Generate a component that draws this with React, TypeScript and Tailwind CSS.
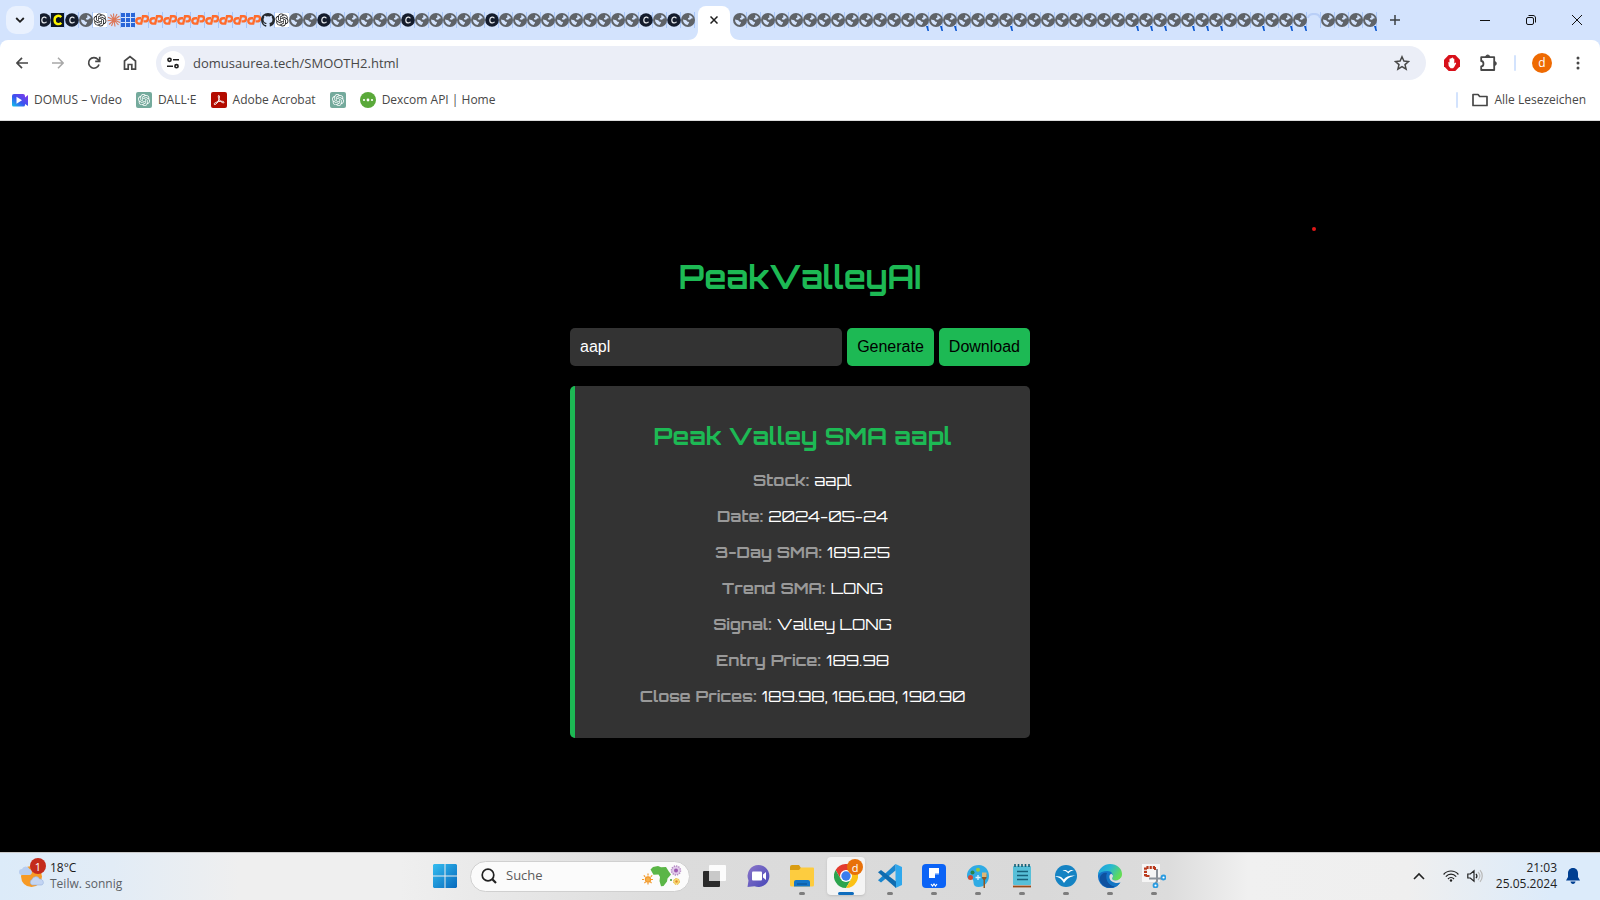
import { useState, type ReactNode } from 'react';

const BLUE_SEP = 'bg-[#a8c7fa]';

function Globe() {
  return (
    <svg viewBox="0 0 14 14" className="size-[14px]">
      <circle cx="7" cy="7" r="7" fill="#5f6368" />
      <path d="M8.200 2c2 .4 3.200 1.700 3.700 3.300l-1.700.2-1.100 1.300-1.900-.2-.3-1.300 1.500-.9z" fill="#d3e3fd" />
      <path d="M2 6.500l3.200.7 1.300 1.500 1.600.4-.5 1.500-1 1.400C4 11.800 2 9.600 2 6.500z" fill="#d3e3fd" />
    </svg>
  );
}

function DarkC() {
  return (
    <svg viewBox="0 0 14 14" className="size-[14px]">
      <circle cx="7" cy="7" r="6.800" fill="#141c2c" />
      <path d="M9.300 5.300C8.800 3.600 5 3.500 4.800 6.900c-.1 3.600 3.700 3.700 4.700 1.900" fill="none" stroke="#e8eaed" strokeWidth="1.200" />
    </svg>
  );
}

function YellowC() {
  return (
    <svg viewBox="0 0 14 14" className="size-[14px]">
      <rect width="13" height="14" fill="#0b1424" />
      <path d="M10.200 4.200C8.600 2 3.600 2.300 3.600 7s5 5 6.600 2.700" fill="none" stroke="#fbf400" strokeWidth="2.400" />
    </svg>
  );
}

function Knot({ color }: { color: string }) {
  return (
    <path
      fill={color}
      d="M22.282 9.821a5.985 5.985 0 0 0-.516-4.910 6.046 6.046 0 0 0-6.510-2.900A6.065 6.065 0 0 0 4.981 4.182a5.985 5.985 0 0 0-3.998 2.900 6.046 6.046 0 0 0 .743 7.097 5.980 5.980 0 0 0 .510 4.911 6.051 6.051 0 0 0 6.515 2.900A5.985 5.985 0 0 0 13.260 24a6.056 6.056 0 0 0 5.772-4.206 5.990 5.990 0 0 0 3.997-2.900 6.056 6.056 0 0 0-.747-7.073zM13.260 22.430a4.476 4.476 0 0 1-2.876-1.040l.141-.081 4.779-2.758a.795.795 0 0 0 .392-.681v-6.737l2.020 1.168a.071.071 0 0 1 .038.052v5.583a4.504 4.504 0 0 1-4.494 4.494zM3.600 18.304a4.470 4.470 0 0 1-.535-3.014l.142.085 4.783 2.759a.771.771 0 0 0 .780 0l5.843-3.369v2.332a.080.080 0 0 1-.033.062L9.740 19.950a4.499 4.499 0 0 1-6.140-1.646zM2.340 7.896a4.485 4.485 0 0 1 2.366-1.973V11.600a.766.766 0 0 0 .388.676l5.815 3.355-2.020 1.168a.076.076 0 0 1-.071 0l-4.830-2.786A4.504 4.504 0 0 1 2.340 7.872zm16.597 3.855l-5.833-3.387L15.119 7.200a.076.076 0 0 1 .071 0l4.830 2.791a4.494 4.494 0 0 1-.676 8.105v-5.678a.790.790 0 0 0-.407-.667zm2.010-3.023l-.141-.085-4.774-2.782a.776.776 0 0 0-.785 0L9.409 9.230V6.897a.066.066 0 0 1 .028-.061l4.830-2.787a4.499 4.499 0 0 1 6.680 4.660zm-12.640 4.135l-2.020-1.164a.080.080 0 0 1-.038-.057V6.075a4.499 4.499 0 0 1 7.375-3.453l-.142.080L8.704 5.460a.795.795 0 0 0-.393.681zm1.097-2.365l2.602-1.500 2.607 1.500v2.999l-2.597 1.500-2.607-1.500z"
    />
  );
}

function KnotTab() {
  return (
    <svg viewBox="-1 -1 26 26" className="size-[14px]">
      <rect x="-1" y="-1" width="26" height="26" fill="#fff" />
      <Knot color="#202123" />
    </svg>
  );
}

function KnotBadge() {
  return (
    <svg viewBox="-4 -4 32 32" className="size-4 shrink-0">
      <rect x="-4" y="-4" width="32" height="32" rx="4" fill="#74aa9c" />
      <Knot color="#fff" />
    </svg>
  );
}

function Burst() {
  return (
    <svg viewBox="0 0 14 14" className="size-[14px]">
      <path
        d="M7 7L6.500.5M7 7l3-6M7 7l5.500-4M7 7l6.500-.5M7 7l6 2.500M7 7l4.500 5M7 7l1 6.500M7 7l-2.500 6M7 7l-5 4.500M7 7L.5 7.800M7 7L1 4.200M7 7L3.500 1.500"
        stroke="#dd7758"
        strokeWidth="1.100"
      />
    </svg>
  );
}

function Squares() {
  return (
    <svg viewBox="0 0 14 14" className="size-[14px]" fill="#2a66d8">
      {[0, 5, 10].map((y) => [0, 5, 10].map((x) => <rect key={`${x}-${y}`} x={x} y={y} width="4" height="4" />))}
    </svg>
  );
}

function PanelMark() {
  return (
    <svg viewBox="0 0 14 14" className="size-[14px]" fill="none" stroke="#ff6c2c" strokeWidth="2.400">
      <path d="M6 5.200H4.200C.4 5.200.4 10.600 3.800 10.600h2.400L8 3.200h2.800c3.300 0 2.600 5.200-.6 5.200H8.500" />
    </svg>
  );
}

function Octocat() {
  return (
    <svg viewBox="0 0 16 16" className="size-[14px]" fill="#24292f">
      <path d="M8 0C3.580 0 0 3.580 0 8c0 3.540 2.290 6.530 5.470 7.590.4.070.55-.17.55-.38v-1.490c-2.230.49-2.700-1.070-2.700-1.070-.36-.92-.89-1.170-.89-1.170-.73-.5.050-.49.050-.49.81.060 1.230.83 1.230.83.72 1.230 1.880.87 2.340.67.070-.52.28-.87.51-1.070-1.780-.2-3.640-.89-3.640-3.950 0-.87.31-1.590.82-2.150-.08-.2-.36-1.020.080-2.120 0 0 .67-.21 2.200.82a7.600 7.600 0 0 1 4 0c1.530-1.040 2.200-.82 2.200-.82.44 1.100.16 1.920.080 2.120.51.56.82 1.270.82 2.150 0 3.070-1.870 3.750-3.650 3.950.29.25.54.73.54 1.480v2.200c0 .21.15.46.55.38A8 8 0 0 0 16 8c0-4.420-3.580-8-8-8z" />
    </svg>
  );
}

const TAB_ICONS: Record<string, () => ReactNode> = {
  g: Globe,
  c: DarkC,
  y: YellowC,
  o: KnotTab,
  b: Burst,
  q: Squares,
  p: PanelMark,
  h: Octocat,
};

const LEFT_TABS = 'ycgobq' + 'ppppppppp' + 'ho' + 'ggc' + 'gggggc' + 'gggggc' + 'ggggggggggc' + 'gcg';
const RIGHT_TABS = 'g'.repeat(41) + '-' + 'g'.repeat(4);
const MARKED = new Set([13, 14, 15, 19, 28, 29, 30, 32, 33, 34, 37, 39, 40, 45]);

function Tab({ kind, marked = false }: { kind: string; marked?: boolean }) {
  const Icon = TAB_ICONS[kind];
  return (
    <button type="button" aria-label="Tab" className="relative flex h-[14px] w-[14px] shrink-0 items-center justify-center">
      <span className={`absolute -top-px right-0 h-4 w-px ${BLUE_SEP}`} />
      <span className="relative">
        {Icon ? (
          <Icon />
        ) : (
          <svg viewBox="0 0 14 14" className="size-[14px]" fill="none" stroke="#b9cff7" strokeWidth="2">
            <path d="M1 5C2-.5 12-.5 13 5" />
          </svg>
        )}
      </span>
      {marked && (
        <svg viewBox="0 0 3 5" className="absolute top-[13px] right-0 h-[5px] w-[3px]">
          <path d="M0 0h2l1 5H1.500z" fill="#0b57d0" />
        </svg>
      )}
    </button>
  );
}

function TabStrip() {
  return (
    <div className="flex h-10 items-center bg-[#d3e3fd]">
      <button type="button" aria-label="Search tabs" className="ml-[6px] flex size-7 shrink-0 items-center justify-center rounded-[10px] bg-[#e9f1fe]">
        <svg viewBox="0 0 10 10" className="size-[10px]" fill="none" stroke="#1f1f1f" strokeWidth="1.800">
          <path d="M1.200 3L5 6.800 8.800 3" />
        </svg>
      </button>
      <div className="ml-[6px] flex w-[11px] shrink-0 justify-end overflow-hidden">
        <Tab kind="c" />
      </div>
      {LEFT_TABS.split('').map((k, i) => (
        <Tab key={i} kind={k} />
      ))}
      <div className="relative mx-[3px] flex h-[34px] w-8 shrink-0 items-center justify-center self-end rounded-t-lg bg-white">
        <svg viewBox="0 0 10 10" className="absolute bottom-0 -left-[10px] size-[10px]" fill="#fff">
          <path d="M10 0v10H0C6 10 10 6 10 0z" />
        </svg>
        <svg viewBox="0 0 10 10" className="absolute -right-[10px] bottom-0 size-[10px]" fill="#fff">
          <path d="M0 0v10h10C4 10 0 6 0 0z" />
        </svg>
        <button type="button" aria-label="Close tab" className="mb-[6px]">
          <svg viewBox="0 0 8 8" className="size-2" stroke="#1f1f1f" strokeWidth="1.500">
            <path d="M.5.5l7 7M7.500.5l-7 7" />
          </svg>
        </button>
      </div>
      {RIGHT_TABS.split('').map((k, i) => (
        <Tab key={i} kind={k} marked={MARKED.has(i)} />
      ))}
      <button type="button" aria-label="New tab" className="ml-[13px] shrink-0">
        <svg viewBox="0 0 10 10" className="size-[10px]" stroke="#3c4043" strokeWidth="1.500">
          <path d="M5 0v10M0 5h10" />
        </svg>
      </button>
      <div className="ml-auto flex shrink-0">
        <button type="button" aria-label="Minimize" className="flex w-[46px] justify-center">
          <svg viewBox="0 0 10 10" className="size-[10px]" stroke="#111" strokeWidth="1">
            <path d="M0 5.500h10" />
          </svg>
        </button>
        <button type="button" aria-label="Restore" className="flex w-[46px] justify-center">
          <svg viewBox="0 0 10 10" className="size-[10px]" fill="none" stroke="#111">
            <rect x=".5" y="2.500" width="7" height="7" rx="1.500" />
            <path d="M2.500 .5h4.500c1.600 0 2.500 1 2.500 2.500v4.500" />
          </svg>
        </button>
        <button type="button" aria-label="Close window" className="flex w-[46px] justify-center">
          <svg viewBox="0 0 10 10" className="size-[10px]" stroke="#111">
            <path d="M0 0l10 10M10 0L0 10" />
          </svg>
        </button>
      </div>
    </div>
  );
}

function ToolButton({ label, children }: { label: string; children: ReactNode }) {
  return (
    <button type="button" aria-label={label} className="flex size-9 shrink-0 items-center justify-center">
      {children}
    </button>
  );
}

function Toolbar() {
  return (
    <div className="flex h-[46px] items-center rounded-t-lg bg-white pl-1">
      <ToolButton label="Back">
        <svg viewBox="0 0 12 12" className="size-3" fill="none" stroke="#474747" strokeWidth="1.700">
          <path d="M12 6H1.200M6 .8L.9 6 6 11.200" />
        </svg>
      </ToolButton>
      <ToolButton label="Forward">
        <svg viewBox="0 0 12 12" className="size-3" fill="none" stroke="#a8a8a8" strokeWidth="1.500">
          <path d="M0 6h10.800M6 .8L11.100 6 6 11.200" />
        </svg>
      </ToolButton>
      <ToolButton label="Reload">
        <svg viewBox="0 0 14 14" className="size-[14px]" fill="none" stroke="#474747" strokeWidth="1.700">
          <path d="M12 8.500A5.300 5.300 0 1 1 11 3.500l1.300 1.500M12.700.8v4.500H8.200" />
        </svg>
      </ToolButton>
      <ToolButton label="Home">
        <svg viewBox="0 0 14 16" className="h-4 w-[14px]" fill="none" stroke="#474747" strokeWidth="1.700">
          <path d="M1.500 14.200V6L7 1.700 12.500 6v8.200H8.800V9.500H5.200v4.700z" />
        </svg>
      </ToolButton>
      <div className="ml-2 flex h-[34px] flex-1 items-center rounded-full bg-[#ebeef7] pr-4 pl-[5px]">
        <button type="button" aria-label="Site information" className="flex size-6 shrink-0 items-center justify-center rounded-full bg-white">
          <svg viewBox="0 0 12 12" className="size-3" fill="none" stroke="#1f1f1f" strokeWidth="1.600">
            <circle cx="2.500" cy="2.800" r="1.600" />
            <path d="M6 2.800h6M0 9.200h6" />
            <circle cx="9.500" cy="9.200" r="1.600" />
          </svg>
        </button>
        <input
          aria-label="Address"
          defaultValue="domusaurea.tech/SMOOTH2.html"
          className="ml-2 min-w-0 flex-1 bg-transparent text-[13px] leading-5 text-[#474747] outline-none"
        />
        <button type="button" aria-label="Bookmark">
          <svg viewBox="0 0 16 16" className="size-4" fill="none" stroke="#474747" strokeWidth="1.500">
            <path d="M8 1.800l1.900 4.300 4.600.4L11 9.600l1.100 4.600L8 11.700l-4.100 2.500L5 9.600 1.500 6.500l4.600-.4z" />
          </svg>
        </button>
      </div>
      <div className="ml-2 flex items-center">
        <ToolButton label="Ad blocker">
          <svg viewBox="0 0 16 16" className="size-4">
            <path d="M4.700 0h6.600L16 4.700v6.600L11.300 16H4.700L0 11.300V4.700z" fill="#d8101a" />
            <path d="M4.300 7l1.200.6V4.200a.6.600 0 0 1 1.200 0v-.7a.6.600 0 0 1 1.200 0v-.3a.6.600 0 0 1 1.200 0v.8a.6.600 0 0 1 1.200 0v4.500l1.200-.9.700.6-2 3.700-1.100 1.300H6.600L4.700 11z" fill="#fff" />
          </svg>
        </ToolButton>
        <ToolButton label="Extensions">
          <svg viewBox="0 0 18 18" className="size-[18px]">
            <path d="M2.200 3.200h13v12.800h-13v-3.500c3-.2 3-5.300 0-5.500z" fill="none" stroke="#474747" strokeWidth="1.800" strokeLinejoin="round" />
            <path d="M6.700 3a2 2 0 0 1 4 0zM15.300 7.500a2 2 0 0 1 0 4z" fill="#474747" stroke="#474747" />
          </svg>
        </ToolButton>
      </div>
      <div className="ml-2 h-4 w-0.5 rounded bg-[#d3e3fd]" />
      <button type="button" aria-label="Profile" className="ml-4 flex size-5 items-center justify-center rounded-full bg-[#ee6a02] text-xs leading-5 text-white">
        d
      </button>
      <button type="button" aria-label="Menu" className="mr-5 ml-6">
        <svg viewBox="0 0 4 14" className="h-[14px] w-1" fill="#474747">
          <circle cx="2" cy="2" r="1.500" />
          <circle cx="2" cy="7" r="1.500" />
          <circle cx="2" cy="12" r="1.500" />
        </svg>
      </button>
    </div>
  );
}

function Bookmark({ icon, text }: { icon: ReactNode; text: string }) {
  return (
    <a href="#" className="flex items-center gap-[6px] whitespace-nowrap">
      {icon}
      {text}
    </a>
  );
}

function Bookmarks() {
  return (
    <nav className="flex h-[35px] items-center gap-[14px] border-b border-[#dcdcdc] bg-white pb-[7px] pl-3 text-xs text-[#474747]">
      <Bookmark
        text="DOMUS – Video"
        icon={
          <svg viewBox="0 0 16 16" className="size-4">
            <defs>
              <linearGradient id="cam" x1="0" y1="1" x2="1" y2="0">
                <stop offset="0" stopColor="#10c8e8" />
                <stop offset=".45" stopColor="#3a54f0" />
                <stop offset="1" stopColor="#8a35e8" />
              </linearGradient>
            </defs>
            <path d="M2 2h9a2 2 0 0 1 2 2v1.500L16 3v11l-3-2v1a1.500 1.500 0 0 1-1.500 1.500H1.500A1.500 1.500 0 0 1 0 13V4a2 2 0 0 1 2-2z" fill="url(#cam)" />
            <path d="M4.500 4.800l5.500 3.500-5.500 3.500z" fill="#fff" />
          </svg>
        }
      />
      <Bookmark text="DALL·E" icon={<KnotBadge />} />
      <Bookmark
        text="Adobe Acrobat"
        icon={
          <svg viewBox="0 0 16 16" className="size-4">
            <rect width="16" height="16" rx="2" fill="#b30b00" />
            <path d="M3.200 12.300c-.9-1 3-2.500 4.600-2.800 2.700-.6 5.300-.2 5.200.9-.3 1.500-3.900-.9-5-3.200-.8-1.600-1-3.800-.2-3.800 1.200 0 .4 4.300-1 6.500-1.200 2-2.900 3.200-3.600 2.400z" fill="none" stroke="#fff" strokeWidth="1" />
          </svg>
        }
      />
      <a href="#" aria-label="Bookmark">
        <KnotBadge />
      </a>
      <Bookmark
        text="Dexcom API | Home"
        icon={
          <svg viewBox="0 0 16 16" className="size-4">
            <circle cx="8" cy="8" r="8" fill="#5aa93a" />
            <g fill="#fff">
              <circle cx="4" cy="8" r="1.100" />
              <circle cx="8" cy="8" r="1.400" />
              <circle cx="12" cy="8" r="1.100" />
            </g>
          </svg>
        }
      />
      <div className="ml-auto h-4 w-0.5 rounded bg-[#d3e3fd]" />
      <a href="#" className="mr-[14px] flex items-center gap-[6px] whitespace-nowrap">
        <svg viewBox="0 0 16 14" className="h-[14px] w-4" fill="none" stroke="#474747" strokeWidth="1.700" strokeLinejoin="round">
          <path d="M1 12.500v-11h5l1.700 2H15v9z" />
        </svg>
        Alle Lesezeichen
      </a>
    </nav>
  );
}

const ROWS = [
  ['Stock:', 'aapl'],
  ['Date:', '2024-05-24'],
  ['3-Day SMA:', '189.25'],
  ['Trend SMA:', 'LONG'],
  ['Signal:', 'Valley LONG'],
  ['Entry Price:', '189.98'],
  ['Close Prices:', '189.98, 186.88, 190.90'],
];

function Page() {
  const [symbol, setSymbol] = useState('aapl');
  return (
    <main className="relative flex flex-1 items-center justify-center bg-black font-[Orbitron,'DejaVu_Sans',sans-serif]">
      <div className="w-[460px] pt-[21px] text-center">
        <h1 className="text-[32px] leading-10 font-bold text-[#1db954]">PeakValleyAI</h1>
        <div className="mt-[31px] flex gap-[5px] font-['Liberation_Sans',Arial,sans-serif] text-base leading-[18px]">
          <input
            aria-label="Stock symbol"
            value={symbol}
            onChange={(e) => setSymbol(e.target.value)}
            className="min-w-0 flex-1 rounded-[5px] bg-[#333] p-[10px] text-white outline-none"
          />
          <button type="button" className="rounded-[5px] bg-[#1db954] p-[10px] text-black">
            Generate
          </button>
          <button type="button" className="rounded-[5px] bg-[#1db954] p-[10px] text-black">
            Download
          </button>
        </div>
        <section className="mt-5 rounded-[5px] border-l-[5px] border-[#1db954] bg-[#333] px-5 pt-9 pb-6">
          <h2 className="text-2xl leading-7 font-bold text-[#1db954]">Peak Valley SMA aapl</h2>
          <dl className="mt-3 text-base leading-9 text-white">
            {ROWS.map(([label, value]) => (
              <div key={label} className="flex justify-center gap-[5px] whitespace-nowrap">
                <dt className="font-bold text-[#999]">{label}</dt>
                <dd>{value}</dd>
              </div>
            ))}
          </dl>
        </section>
      </div>
      <span className="absolute top-[106px] left-[82%] size-1 rounded-full bg-[#e01818]" />
    </main>
  );
}

function TaskIcon({ label, running = true, active = false, children }: { label: string; running?: boolean; active?: boolean; children: ReactNode }) {
  return (
    <button type="button" aria-label={label} className="relative flex h-[46px] w-11 shrink-0 items-center justify-center">
      <span className={active ? 'flex h-[38px] w-[38px] items-center justify-center rounded bg-[#f4f4f4] shadow-sm' : 'flex'}>{children}</span>
      {running && <span className={active ? 'absolute bottom-1 h-[3px] w-4 rounded-full bg-[#0f6cbd]' : 'absolute bottom-1 h-[3px] w-[6px] rounded-full bg-[#7d7d7d]'} />}
    </button>
  );
}

function TaskIcons() {
  return (
    <>
      <TaskIcon label="Task view" running={false}>
        <svg viewBox="0 0 24 24" className="size-6">
          <rect x="1" y="7" width="17" height="16" rx="1" fill="#2b2b2b" />
          <rect x="7" y="1" width="17" height="16" rx="1" fill="#fcfcfc" />
          <rect x="7" y="7" width="11" height="10" fill="#c9c9c9" />
        </svg>
      </TaskIcon>
      <TaskIcon label="Chat" running={false}>
        <svg viewBox="0 0 24 24" className="size-6">
          <defs>
            <linearGradient id="chat" x1="0" y1="0" x2="1" y2="1">
              <stop offset="0" stopColor="#8b76c9" />
              <stop offset="1" stopColor="#4747b8" />
            </linearGradient>
          </defs>
          <path d="M12.500 1a11 11 0 1 1-4 21.300L1.500 23l1-6.500A11 11 0 0 1 12.500 1z" fill="url(#chat)" />
          <rect x="6" y="7.500" width="10" height="9" rx="1" fill="#fff" />
          <path d="M17 10.500l3-2.500v8l-3-2.500z" fill="#fff" />
        </svg>
      </TaskIcon>
      <TaskIcon label="Explorer">
        <svg viewBox="0 0 24 24" className="size-6">
          <path d="M0 3a2 2 0 0 1 2-2h7l2 3v4H0z" fill="#d99c12" />
          <path d="M0 6h9l2-2.500h12a1 1 0 0 1 1 1V21a1.500 1.500 0 0 1-1.500 1.500h-21A1.500 1.500 0 0 1 0 21z" fill="#fdcc3f" />
          <path d="M4 22.500V18a2 2 0 0 1 2-2h12a2 2 0 0 1 2 2v4.500z" fill="#1476c8" />
          <path d="M7 19.500h10v1H7z" fill="#0a4f8c" />
        </svg>
      </TaskIcon>
      <TaskIcon label="Chrome" active>
        <span className="relative flex">
          <svg viewBox="0 0 24 24" className="size-6">
            <circle cx="12" cy="12" r="12" fill="#fff" />
            <path d="M12 6h10.400A12 12 0 0 0 1.600 6l5.200 9z" fill="#e33b2e" />
            <path d="M6.800 15L1.600 6A12 12 0 0 0 12 24l5.200-9z" fill="#2da44e" />
            <path d="M17.200 15L12 24A12 12 0 0 0 22.400 6H12z" fill="#fbc116" />
            <circle cx="12" cy="12" r="6" fill="#fff" />
            <circle cx="12" cy="12" r="4.700" fill="#3b7ded" />
          </svg>
          <span className="absolute -top-[5px] -right-[5px] flex size-4 items-center justify-center rounded-full bg-[#e8710a] text-[11px] leading-none text-white">d</span>
        </span>
      </TaskIcon>
      <TaskIcon label="Code">
        <svg viewBox="0 0 24 24" className="size-6">
          <path d="M17.500 0L24 3v18l-6.500 3z" fill="#2fa8ed" />
          <path d="M17.500 0v6.500L3 18.500l-3-2.200z" fill="#1a86cf" />
          <path d="M0 8.200L3 6l15 11.500V24z" fill="#0f6cb0" />
        </svg>
      </TaskIcon>
      <TaskIcon label="Editor">
        <svg viewBox="0 0 24 24" className="size-6">
          <rect width="24" height="24" rx="4" fill="#0b63f6" />
          <path d="M7 4h10v5h-4v5H7z" fill="#fff" />
          <path d="M13 9h4v1.500h-4z" fill="#9cc3ff" />
          <path d="M9 20l1.500 2 1.500-2 1.500 2 1.500-2" fill="none" stroke="#fff" strokeWidth="1.200" />
        </svg>
      </TaskIcon>
      <TaskIcon label="Paint">
        <svg viewBox="0 0 24 24" className="size-6">
          <path d="M13 1C6 1 1 6 1 11.500c0 3 1.500 3.500 3.500 3.500 2.500 0 3 1 3 3.500 0 3 2 4.500 5 4.500 6 0 10.500-5 10.500-11S19 1 13 1z" fill="#2fabe4" />
          <circle cx="4.500" cy="13.500" r="2.500" fill="#cf4a35" />
          <circle cx="6.500" cy="8.500" r="2" fill="#28834a" />
          <circle cx="12" cy="5.800" r="2" fill="#9ac93c" />
          <path d="M12 11v5M9.500 13.500h5" stroke="#d8f2ff" strokeWidth="1.300" />
          <path d="M16 10h4.500v4L19 16v8h-1.500v-8L16 14z" fill="#91561f" />
          <path d="M16 8.500h4.500V13H16z" fill="#ddb77a" />
        </svg>
      </TaskIcon>
      <TaskIcon label="Notepad">
        <svg viewBox="0 0 24 24" className="size-6">
          <rect x="3" y="2" width="18" height="19" rx="1" fill="#57bfd8" />
          <path d="M5 0v3M8.500 0v3M12 0v3M15.500 0v3M19 0v3" stroke="#155e75" strokeWidth="1.600" />
          <path d="M7 7.500h11M7 11.500h11M7 15.500h11" stroke="#17607a" strokeWidth="1.400" />
          <path d="M3 22.500h18" stroke="#9a4a18" strokeWidth="1.800" />
        </svg>
      </TaskIcon>
      <TaskIcon label="Office">
        <svg viewBox="0 0 24 24" className="size-6">
          <circle cx="12" cy="12" r="11" fill="#1583c3" />
          <path d="M8.500 6.500c2.500-1 4.500-.3 5.500 1.300C15.500 6 18 5.500 20 6.500c-2.500 0-4.200 1-5.700 3-1.500-2-3.300-3-5.800-3zM1 12.500c4-1 6.800.2 8.700 3C12 12.300 16 11 22 11.500c-5.200.8-9 3-12 7.500-2-3.800-4.800-6-9-6.500z" fill="#fff" />
        </svg>
      </TaskIcon>
      <TaskIcon label="Edge">
        <svg viewBox="0 0 24 24" className="size-6">
          <defs>
            <linearGradient id="edge" x1="0" y1="0" x2="1" y2=".5">
              <stop offset="0" stopColor="#1b9de2" />
              <stop offset=".5" stopColor="#28b8d0" />
              <stop offset="1" stopColor="#63dc55" />
            </linearGradient>
          </defs>
          <path d="M0 12C0 5 5 2 12 2l3 8 7 9a12 12 0 0 1-22-7z" fill="#1473c8" />
          <path d="M0 11C1 4 6 0 12 0c7 0 12 4.500 12 10 0 4-3 6.500-6.500 6.500-3 0-4-1.500-3-3 2-3-1-6.500-5-6.500C5 7 1.500 8.500 0 11z" fill="url(#edge)" />
          <path d="M9 9c-2 5 0 11.500 8 13.500C9 26.500 0 20 2 13c1-3 4-5 7-4z" fill="#0e51a0" />
          <path d="M12.500 9.500c-4 4 0 10 5.500 9.500 2 0 3.500-.8 4.600-1.300-1 2-2.600 3.700-4.600 4.800C8 22 7 12 12.500 9.500z" fill="#1476c4" />
          <path d="M13.200 9.800c2 1 2.200 2.500 1.300 3.800-1 1.500 0 2.900 3 2.900 2.500 0 4.500-1 5.500-2.800.8 2 .1 4-.9 4.800-4 1.500-11.100-.500-10.700-6 .1-1.300.9-2.200 1.800-2.700z" fill="#dcdddf" />
        </svg>
      </TaskIcon>
      <TaskIcon label="Snipping tool">
        <svg viewBox="0 0 24 24" className="size-6">
          <rect width="18" height="18" fill="#f5f5f5" />
          <path d="M13 3.500H3.500V13" fill="none" stroke="#b9391c" strokeWidth="3" strokeDasharray="2.200 1" />
          <path d="M13 3v3M3.500 12h4" stroke="#b9391c" strokeWidth="2" />
          <path d="M15 5v12l-1.500 3M7 14.500h13" fill="none" stroke="#8b929a" strokeWidth="2" />
          <g fill="#fff" stroke="#2a9be0" strokeWidth="1.800">
            <circle cx="21.500" cy="13.500" r="2" />
            <circle cx="13.500" cy="21.500" r="2" />
          </g>
        </svg>
      </TaskIcon>
    </>
  );
}

function SearchArt() {
  return (
    <svg viewBox="0 0 40 22" className="h-[22px] w-10 shrink-0">
      <path d="M8.500 4.500L11 2l5-1 3 1.200L24 2l2.500 4 2.500 3.500-3.500 4-.5 3-3.500 4.500-2.500.3L17.500 16l.5-4-1.500-2.500-5 .3z" fill="#5bb647" />
      <g stroke="#f29a2e" strokeWidth="1.200">
        <path d="M6 8.500v12M0 14.500h12M1.800 10.300l8.400 8.400M10.200 10.300l-8.400 8.400" strokeDasharray="2 1" />
        <circle cx="6" cy="14.500" r="2.600" fill="#f6b04a" />
      </g>
      <circle cx="34" cy="5.500" r="4.500" fill="#e1cbea" stroke="#b58bc4" strokeDasharray="1.300 1" strokeWidth="1.500" />
      <circle cx="34" cy="5.500" r="2" fill="#9c5ab0" />
      <circle cx="34.500" cy="16.500" r="3" fill="#f7da78" stroke="#e6b93c" strokeDasharray="1.500 1" />
      <circle cx="34.500" cy="16.500" r="1.200" fill="#e18d2a" />
      <circle cx="29" cy="15" r="1" fill="#3f9b3a" />
    </svg>
  );
}

function Taskbar() {
  return (
    <footer className="flex h-12 items-center border-t border-[#c9c9c9] bg-[linear-gradient(90deg,#dcebf9_0%,#e2ecf6_7%,#efefef_15%,#efefef_25%,#dcdcdc_42%,#d9d9d9_65%,#dcdcdc_73%,#f0f0f0_78%,#efefef_88%,#dcebfa_97%)] pb-px text-xs">
      <div className="flex flex-1 items-center gap-[5px] pl-[19px]">
        <div className="relative">
          <svg viewBox="0 0 26 26" className="size-[26px]">
            <circle cx="12.500" cy="13.500" r="10.500" fill="#f79a25" />
            <path d="M3 12a3 3 0 0 1 0-6 4 4 0 0 1 7.500 0c3 0 3.500 6 0 6z" fill="#b8cef0" />
            <path d="M13 22a3 3 0 0 1 0-5.500 4 4 0 0 1 7.500-.5c4-.5 5.500 6 1.500 6z" fill="#c3d5f3" stroke="#93aedb" strokeWidth=".6" />
          </svg>
          <span className="absolute -top-[5px] -right-[1px] flex size-4 items-center justify-center rounded-full bg-[#c42b1c] text-[11px] leading-none text-white">1</span>
        </div>
        <div className="leading-4">
          <p className="text-[#1a1a1a]">18°C</p>
          <p className="text-[#5c6166]">Teilw. sonnig</p>
        </div>
      </div>
      <div className="flex items-center">
        <TaskIcon label="Start" running={false}>
          <svg viewBox="0 0 24 24" className="size-6">
            <defs>
              <linearGradient id="win" x1="0" y1="0" x2="1" y2="1">
                <stop offset="0" stopColor="#35bdf0" />
                <stop offset="1" stopColor="#0669bd" />
              </linearGradient>
            </defs>
            <path d="M1 0h10.500v11.500H0V1zM12.500 0H23l1 1v10.500H12.500zM0 12.500h11.500V24H1l-1-1zM12.500 12.500H24V23l-1 1H12.500z" fill="url(#win)" />
          </svg>
        </TaskIcon>
        <label className="mr-0.5 ml-[3px] flex h-[31px] w-[220px] items-center rounded-full border border-[#d0d0d0] bg-[#fbfbfb] pr-[7px] pl-[10px]">
          <svg viewBox="0 0 16 16" className="size-4 shrink-0" fill="none" stroke="#222" strokeWidth="1.700">
            <circle cx="7" cy="7" r="5.800" />
            <path d="M11.300 11.300L15 15" strokeWidth="2.200" />
          </svg>
          <input aria-label="Suche" placeholder="Suche" className="ml-[9px] min-w-0 flex-1 bg-transparent text-[13px] outline-none placeholder:text-[#5c5c5c]" />
          <SearchArt />
        </label>
        <TaskIcons />
      </div>
      <div className="flex flex-1 items-center justify-end pr-5">
        <button type="button" aria-label="Hidden icons">
          <svg viewBox="0 0 12 8" className="h-2 w-3" fill="none" stroke="#222" strokeWidth="1.600">
            <path d="M1 7l5-5 5 5" />
          </svg>
        </button>
        <button type="button" aria-label="Network and sound" className="ml-[18px] flex items-center gap-2">
          <svg viewBox="0 0 16 12" className="h-3 w-4" fill="none" stroke="#222" strokeWidth="1.200">
            <path d="M.6 4.500C4.500-.2 11.500-.2 15.400 4.500M2.800 6.700c3-3.500 7.400-3.500 10.400 0M5 9c1.700-2 4.300-2 6 0" />
            <circle cx="8" cy="10.500" r="1.200" fill="#222" stroke="none" />
          </svg>
          <svg viewBox="0 0 16 14" className="h-[14px] w-4" fill="none" stroke="#222" strokeWidth="1.200">
            <path d="M.8 5v4h2.500L7 12.200V1.800L3.300 5zM9 4.800c1.200 1.400 1.200 3 0 4.400" />
            <path d="M11 3c2.200 2.400 2.200 5.600 0 8M13 1.200c3 3.400 3 8.200 0 11.600" stroke="#b8b8b8" />
          </svg>
        </button>
        <div className="ml-[13px] text-right leading-4 text-[#222]">
          <p>21:03</p>
          <p>25.05.2024</p>
        </div>
        <button type="button" aria-label="Notifications" className="ml-[9px]">
          <svg viewBox="0 0 14 16" className="h-4 w-[14px]" fill="#003f91">
            <path d="M7 0c3.300 0 5 2.400 5 5.500V9l2 3.500H0L2 9V5.500C2 2.400 3.700 0 7 0zM4.500 13.500h5C9.300 15 8.300 16 7 16s-2.300-1-2.500-2.500z" />
          </svg>
        </button>
      </div>
    </footer>
  );
}

export default function App() {
  return (
    <div className="flex min-h-screen flex-col overflow-x-hidden bg-[#d3e3fd] font-['Segoe_UI','Open_Sans',sans-serif]">
      <header>
        <TabStrip />
        <Toolbar />
        <Bookmarks />
      </header>
      <Page />
      <Taskbar />
    </div>
  );
}
